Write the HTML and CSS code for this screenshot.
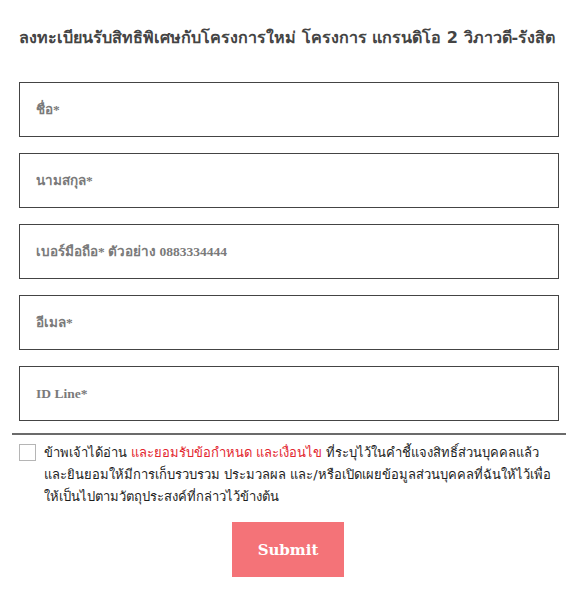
FILE: index.html
```html
<!DOCTYPE html>
<html lang="th">
<head>
<meta charset="utf-8">
<title>ลงทะเบียน</title>
<link rel="stylesheet" href="styles.css">
</head>
<body>
<div class="page">
  <h2 class="title">ลงทะเบียนรับสิทธิพิเศษกับโครงการใหม่ โครงการ แกรนดิโอ 2 วิภาวดี-รังสิต</h2>
  <form class="form">
    <div class="fields">
      <input class="field" type="text" placeholder="ชื่อ*">
      <input class="field" type="text" placeholder="นามสกุล*">
      <input class="field" type="text" placeholder="เบอร์มือถือ* ตัวอย่าง 0883334444">
      <input class="field" type="text" placeholder="อีเมล*">
      <input class="field" type="text" placeholder="ID Line*">
    </div>
    <hr class="divider">
    <label class="consent">
      <span class="box"></span>
      <span class="consent-text">ข้าพเจ้าได้อ่าน <span class="link">และยอมรับข้อกำหนด และเงื่อนไข</span> ที่ระบุไว้ในคำชี้แจงสิทธิ์ส่วนบุคคลแล้ว และยินยอมให้มีการเก็บรวบรวม ประมวลผล และ/หรือเปิดเผยข้อมูลส่วนบุคคลที่ฉันให้ไว้เพื่อให้เป็นไปตามวัตถุประสงค์ที่กล่าวไว้ข้างต้น</span>
    </label>
    <div class="actions">
      <button class="submit" type="button">Submit</button>
    </div>
  </form>
</div>
</body>
</html>
```
FILE: styles.css
```css
html, body {
  margin: 0;
  padding: 0;
  background: #ffffff;
}
.page {
  padding: 27px 12px 0 12px;
  font-family: Tahoma, "DejaVu Sans", "Noto Sans", sans-serif;
}
.title {
  margin: 0 0 0 7px;
  font-size: 16.1px;
  font-weight: bold;
  color: #444444;
  line-height: 22px;
}
.form {
  margin-top: 33px;
}
.fields {
  display: flex;
  flex-direction: column;
  gap: 16px;
  padding: 0 13px 0 7px;
}
.field {
  box-sizing: border-box;
  width: 540px;
  height: 55px;
  border: 1px solid #444444;
  border-radius: 0;
  padding: 0 16px;
  font-family: "Liberation Serif", serif;
  font-weight: bold;
  font-size: 13.5px;
  color: #333333;
  outline: none;
}
.field::placeholder {
  color: #7a7a7a;
}
.divider {
  margin: 12px 5px 0 0;
  border: 0;
  border-top: 2px solid #6b6b6b;
  height: 0;
}
.consent {
  display: flex;
  gap: 8px;
  margin: 7px 0 0 7px;
  font-size: 13px;
  color: #1e1e1e;
  line-height: 22px;
}
.box {
  flex: none;
  width: 15px;
  height: 15px;
  border: 1px solid #b5b5b5;
  margin-top: 2px;
}
.consent-text {
  width: 520px;
}
.link {
  color: #e3262e;
}
.actions {
  display: flex;
  justify-content: center;
  margin-top: 14px;
  padding-right: 7px;
}
.submit {
  width: 112px;
  height: 55px;
  border: 0;
  background: #f47378;
  color: #ffffff;
  font-family: "DejaVu Serif", serif;
  font-weight: bold;
  font-size: 15px;
}
```
